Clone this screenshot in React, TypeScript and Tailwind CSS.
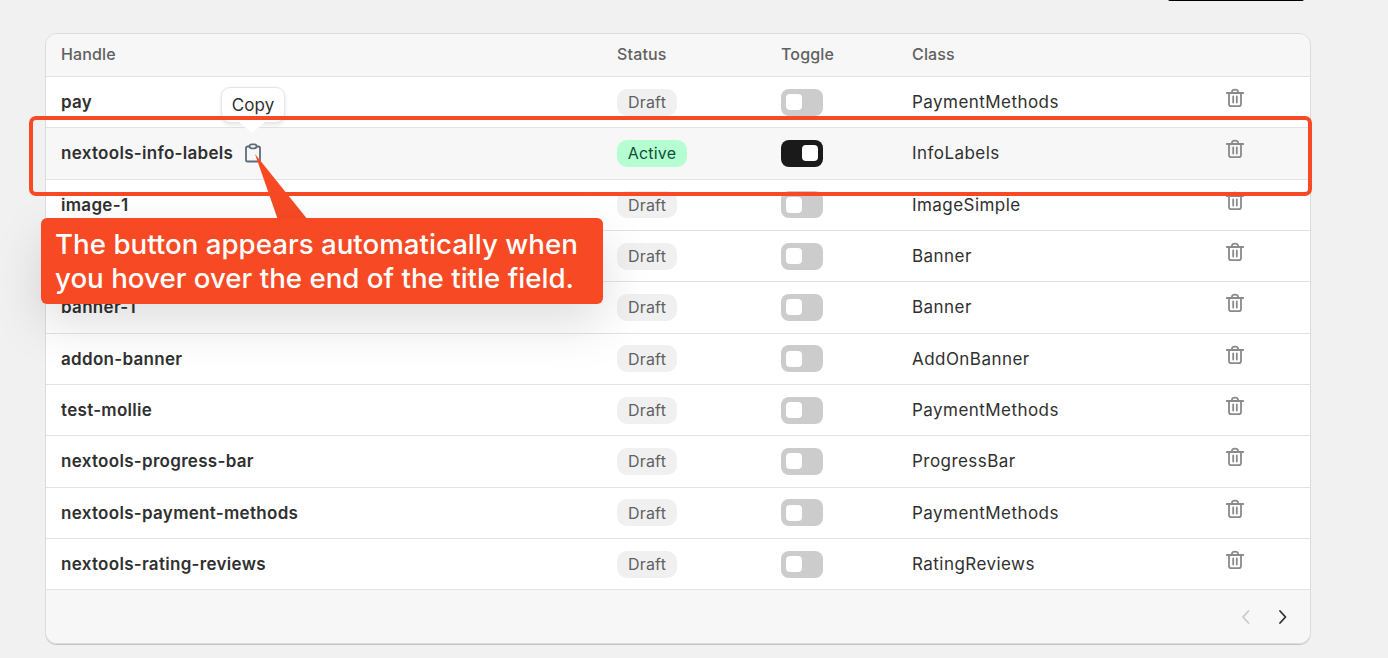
import React from 'react';

// the handle of the fourth row sits behind the callout, so it stays empty
const rows = [
    { handle: 'pay', className: 'PaymentMethods' },
    { handle: 'nextools-info-labels', className: 'InfoLabels', active: true },
    { handle: 'image-1', className: 'ImageSimple' },
    { handle: '', className: 'Banner' },
    { handle: 'banner-1', className: 'Banner' },
    { handle: 'addon-banner', className: 'AddOnBanner' },
    { handle: 'test-mollie', className: 'PaymentMethods' },
    { handle: 'nextools-progress-bar', className: 'ProgressBar' },
    { handle: 'nextools-payment-methods', className: 'PaymentMethods' },
    { handle: 'nextools-rating-reviews', className: 'RatingReviews' },
];

const cols = 'grid grid-cols-[556px_164px_131px_314px_1fr] items-center pl-[15px]';

function TrashIcon() {
    return (
        <svg width="20" height="20" viewBox="0 0 20 20" fill="none" stroke="#8a8a8a" strokeWidth="1.8" strokeLinecap="round" strokeLinejoin="round">
            <path d="M1.8 5h16.4" />
            <path d="M7 5V3.6C7 2.6 8.2 1.6 10 1.6s3 1 3 2V5" />
            <path d="M4 5v11c0 1.3.9 2.2 2.2 2.2h7.6c1.3 0 2.2-.9 2.2-2.2V5" />
            <path d="M8.2 8.5v6M11.8 8.5v6" />
        </svg>
    );
}

function ClipboardIcon() {
    return (
        <svg className="-mt-[1px] ml-[1px]" width="18" height="20" viewBox="0 0 18 20" fill="none" stroke="#5f6b7a" strokeWidth="1.8" strokeLinejoin="round">
            <path d="M5.5 3.5H3.6C2.7 3.5 2 4.2 2 5.1v11.8c0 .9.7 1.6 1.6 1.6h10.8c.9 0 1.6-.7 1.6-1.6V5.1c0-.9-.7-1.6-1.6-1.6h-1.9" />
            <rect x="5.5" y="1.3" width="7" height="4" rx="2" />
        </svg>
    );
}

function Row({ handle, className, active }: { handle: string; className: string; active?: boolean }) {
    return (
        <div className={`${cols} h-[51.33px] border-b border-[#e3e3e3] ${active ? 'bg-[#f7f7f7]' : 'bg-white'}`}>
            <div className="flex items-center gap-[10px] pt-[1px] text-[17px] font-semibold tracking-[0.3px] text-[#303030]">
                {handle}
                {active && <ClipboardIcon />}
            </div>
            <div className="flex">
                {active ? (
                    <span className="flex h-[27px] w-[70px] items-center justify-center rounded-[10px] bg-[#b4fed2] text-[16px] tracking-[0.2px] text-[#0c5132]">Active</span>
                ) : (
                    <span className="flex h-[27px] w-[60px] items-center justify-center rounded-[10px] bg-[#f0f0f0] text-[16px] tracking-[0.2px] text-[#616161]">Draft</span>
                )}
            </div>
            <div>
                <div className={`flex h-[27px] w-[42px] items-center rounded-[8px] px-[5px] ${active ? 'justify-end bg-[#1a1a1a]' : 'bg-[#cccccc]'}`}>
                    <div className="h-[16px] w-[16px] rounded-[4px] bg-white" />
                </div>
            </div>
            <div className="pt-[1px] text-[17px] tracking-[0.45px] text-[#303030]">{className}</div>
            <div className="-mt-[8px] -ml-[1px]">
                <TrashIcon />
            </div>
        </div>
    );
}

export default function App() {
    return (
        <div className="relative h-[658px] overflow-hidden bg-[#f1f1f1] font-['Inter',sans-serif]">
            <div className="absolute -top-[1px] left-[1168px] h-[2px] w-[136px] rounded-b-[2px] bg-black" />

            <div className="ml-[45px] mt-[33px] w-[1266px] overflow-hidden rounded-[12px] border border-[#dcdcdc] shadow-[0_1px_0_#c4c4c4]">
                <div className={`${cols} h-[43px] border-b border-[#e3e3e3] bg-[#f7f7f7] pb-[2px] text-[16px] font-medium tracking-[0.15px] text-[#616161]`}>
                    <div>Handle</div>
                    <div>Status</div>
                    <div>Toggle</div>
                    <div>Class</div>
                    <div />
                </div>
                {rows.map((row, i) => (
                    <Row key={i} {...row} />
                ))}
                <div className="flex h-[53px] items-center justify-end gap-[25px] bg-[#f7f7f7] pr-[21px]">
                    <svg width="12" height="16" viewBox="0 0 12 16" fill="none" stroke="#c9c9c9" strokeWidth="1.8" strokeLinecap="round" strokeLinejoin="round">
                        <path d="M8.5 2 3 8l5.5 6" />
                    </svg>
                    <svg width="12" height="16" viewBox="0 0 12 16" fill="none" stroke="#303030" strokeWidth="1.8" strokeLinecap="round" strokeLinejoin="round">
                        <path d="M3 2l5.5 6L3 14" />
                    </svg>
                </div>
            </div>

            {/* annotation layer */}
            <div className="absolute left-[221px] top-[87px] flex h-[36px] w-[64px] items-center justify-center rounded-[9px] border border-[#e6e6e6] bg-white pt-[2px] text-[17px] tracking-[0.1px] text-[#303030] shadow-[0_2px_4px_rgba(0,0,0,0.1)]">
                Copy
            </div>
            <svg className="absolute left-[239px] top-[122px]" width="26" height="11" viewBox="0 0 26 11">
                <path d="M0 0h26L13 11z" fill="white" />
            </svg>

            <div className="absolute left-[29px] top-[116px] h-[80px] w-[1283px] rounded-[7px] border-[4px] border-[#f74a24]" />

            <svg className="absolute left-[250px] top-[150px]" width="64" height="72" viewBox="0 0 64 72">
                <path d="M5 4 28 70h30z" fill="#f74a24" />
            </svg>
            <div className="absolute left-[41px] top-[218px] h-[86px] w-[562px] rounded-[6px] bg-[#f74a24] py-[9px] pl-[14px] text-[27.7px] leading-[34px] font-medium text-white shadow-[0_20px_50px_rgba(0,0,0,0.13)]">
                The button appears automatically when
                <br />
                you hover over the end of the title field.
            </div>
        </div>
    );
}
